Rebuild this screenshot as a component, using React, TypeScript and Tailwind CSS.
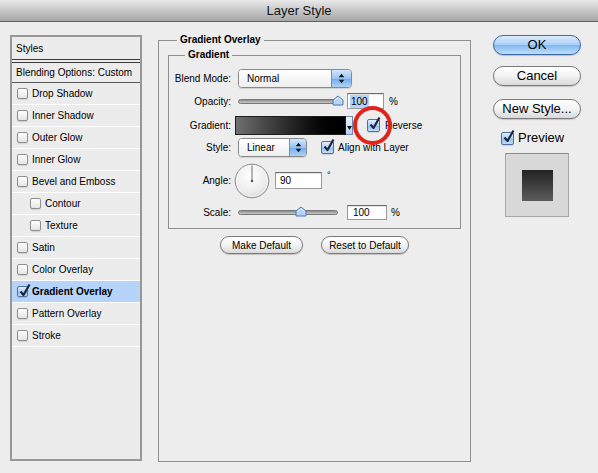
import React from "react";

// Aqua-style checkbox; the tick overflows the box like the Mac original
function CheckBox({ checked = false, big = false }: { checked?: boolean; big?: boolean }) {
  const box = big ? "w-[13px] h-[13px]" : "w-[11px] h-[11px]";
  const face = checked
    ? "border-[#50719f] bg-[linear-gradient(to_bottom,#e2eefc,#b0d0f4_50%,#8dbbee_51%,#c4def9)]"
    : "border-[#8f8f8f] bg-linear-to-b from-white to-[#e4e4e4]";
  return (
    <span className={`relative shrink-0 rounded-[2px] border shadow-[0_1px_1px_rgba(0,0,0,0.12)] ${box} ${face}`}>
      {checked && (
        <svg
          className="absolute left-[1px] top-[-3px] overflow-visible"
          width="11"
          height="13"
          viewBox="0 0 11 13"
        >
          <path d="M1.5 7.5 L4.5 11 L10.5 0.5" fill="none" stroke="#1a2744" strokeWidth="2.2" strokeLinejoin="round" />
        </svg>
      )}
    </span>
  );
}

function PopUp({ label, className, arrowClass }: { label: string; className: string; arrowClass: string }) {
  return (
    <div className={`flex h-[19px] overflow-hidden rounded-[4px] border border-[#8a8a8a] shadow-[0_1px_1px_rgba(0,0,0,0.12)] ${className}`}>
      <div className="flex flex-1 items-center bg-linear-to-b from-white to-[#eeeeee] pl-[8px]">{label}</div>
      <div
        className={`flex items-center justify-center border-l border-[#6f8fbd] bg-[linear-gradient(to_bottom,#d3e6fb,#98c4f3_50%,#70aaeb_51%,#add3f9)] ${arrowClass}`}
      >
        <svg width="7" height="11" viewBox="0 0 7 11">
          <path d="M3.5 0.8 L6.3 4.2 L0.7 4.2 Z M3.5 10.2 L6.3 6.8 L0.7 6.8 Z" fill="#151515" />
        </svg>
      </div>
    </div>
  );
}

function Slider({ className, thumbClass }: { className: string; thumbClass: string }) {
  return (
    <div className={`relative flex h-[12px] items-center ${className}`}>
      <div className="h-[5px] w-full rounded-full border border-[#787878] bg-linear-to-b from-[#8e8e8e] to-[#c9c9c9]" />
      <svg className={`absolute top-[0px] ${thumbClass}`} width="12" height="11" viewBox="0 0 12 11">
        <path
          d="M1 10 L1 5 L6 1 L11 5 L11 10 Z"
          fill="#b4d4f7"
          stroke="#4d78b0"
          strokeWidth="1"
          strokeLinejoin="round"
        />
        <path d="M2 6 L6 2.6 L10 6" fill="none" stroke="#e8f2fd" strokeWidth="1" />
      </svg>
    </div>
  );
}

function NumField({ value, className, selected = false }: { value: string; className: string; selected?: boolean }) {
  return (
    <div
      className={`flex items-center border border-[#9a9a9a] border-t-[#6a6a6a] bg-white pl-[2px] shadow-[inset_0_1px_1px_rgba(0,0,0,0.12)] ${className}`}
    >
      <span className={selected ? "bg-[#b3d3fb] px-[1px] leading-[13px]" : "px-[1px] leading-[13px]"}>{value}</span>
    </div>
  );
}

function PillButton({ children, className }: { children: React.ReactNode; className: string }) {
  return (
    <div
      className={`flex items-center justify-center rounded-full border border-[#7b7b7b] bg-linear-to-b from-white via-[#f3f3f3] to-[#d9d9d9] shadow-[0_1px_1px_rgba(0,0,0,0.18)] ${className}`}
    >
      {children}
    </div>
  );
}

function Dial() {
  return (
    <svg className="-ml-[4px] shrink-0" width="36" height="36" viewBox="0 0 36 36">
      <defs>
        <radialGradient id="dialFace" cx="45%" cy="35%" r="70%">
          <stop offset="0%" stopColor="#ffffff" />
          <stop offset="70%" stopColor="#ececec" />
          <stop offset="100%" stopColor="#d2d2d2" />
        </radialGradient>
      </defs>
      <circle cx="18" cy="18" r="16.8" fill="url(#dialFace)" stroke="#8a8a8a" strokeWidth="1" />
      <circle cx="18" cy="18" r="15.6" fill="none" stroke="#ffffff" strokeWidth="0.8" opacity="0.8" />
      <line x1="18" y1="18" x2="18" y2="2.5" stroke="#6e6e6e" strokeWidth="1" />
      <circle cx="18" cy="18" r="1.3" fill="#555" />
    </svg>
  );
}

const effects: { name: string; indent?: boolean; checked?: boolean }[] = [
  { name: "Drop Shadow" },
  { name: "Inner Shadow" },
  { name: "Outer Glow" },
  { name: "Inner Glow" },
  { name: "Bevel and Emboss" },
  { name: "Contour", indent: true },
  { name: "Texture", indent: true },
  { name: "Satin" },
  { name: "Color Overlay" },
  { name: "Gradient Overlay", checked: true },
  { name: "Pattern Overlay" },
  { name: "Stroke" },
];

function StyleList() {
  return (
    <div className="mt-[13px] h-[426px] w-[132px] shrink-0 border-2 border-[#979797] bg-[#ececec]">
      <div className="flex h-[22px] items-center pl-[4px]">Styles</div>
      <div className="h-[4px] border-y border-[#3c3c3c]" />
      <div className="flex h-[20px] items-center border-b border-[#5a5a5a] pl-[4px]">Blending Options: Custom</div>
      {effects.map((e) => (
        <div
          key={e.name}
          className={`flex h-[22px] items-center gap-[4px] border-b border-white ${e.indent ? "pl-[18px]" : "pl-[5px]"} ${
            e.checked ? "bg-[#b6d4fa] font-bold" : ""
          }`}
        >
          <CheckBox checked={e.checked} />
          <span>{e.name}</span>
        </div>
      ))}
    </div>
  );
}

function Label({ children }: { children: React.ReactNode }) {
  return <span className="w-[62px] shrink-0 text-right">{children}</span>;
}

function GradientPanel() {
  return (
    <fieldset className="ml-[16px] mt-[12px] h-[428px] w-[313px] shrink-0 border border-[#8f8f8f] px-[9px] pt-[3px]">
      <legend className="ml-[9px] px-[3px] text-[10px] font-bold leading-[12px]">Gradient Overlay</legend>

      <fieldset className="w-full border border-[#8f8f8f] pb-[8px] pt-[8px]">
        <legend className="ml-[16px] px-[3px] font-bold leading-[12px]">Gradient</legend>

        <div className="flex h-[19px] items-center">
          <Label>Blend Mode:</Label>
          <PopUp label="Normal" className="ml-[7px] w-[114px]" arrowClass="w-[20px]" />
        </div>

        <div className="mt-[5px] flex h-[16px] items-center">
          <Label>Opacity:</Label>
          <Slider className="ml-[7px] w-[104px]" thumbClass="left-[94px]" />
          <NumField value="100" selected className="ml-[5px] h-[16px] w-[37px]" />
          <span className="ml-[5px]">%</span>
        </div>

        <div className="mt-[7px] flex h-[19px] items-center">
          <Label>Gradient:</Label>
          <div className="ml-[4px] flex h-[19px]">
            <div className="h-full w-[111px] border border-[#1e1e1e] bg-linear-to-r from-[#707070] to-black" />
            <div className="flex h-full w-[7px] items-end justify-center border-y border-r border-[#6f8aae] bg-linear-to-b from-[#edf4fd] to-[#b6d0ef] pb-[4px]">
              <svg width="5" height="4" viewBox="0 0 5 4">
                <path d="M0 0 L5 0 L2.5 4 Z" fill="#111" />
              </svg>
            </div>
          </div>
          <span className="relative ml-[14px] flex items-center">
            <CheckBox checked big />
            <span className="pointer-events-none absolute left-1/2 top-1/2 h-[39px] w-[39px] -translate-x-[21px] -translate-y-[20px] rounded-full border-[4px] border-[#e2231a]" />
          </span>
          <span className="ml-[5px]">Reverse</span>
        </div>

        <div className="mt-[3px] flex h-[19px] items-center">
          <Label>Style:</Label>
          <PopUp label="Linear" className="ml-[7px] w-[69px]" arrowClass="w-[17px]" />
          <span className="ml-[14px] flex items-center">
            <CheckBox checked big />
          </span>
          <span className="ml-[4px]">Align with Layer</span>
        </div>

        <div className="mt-[6px] flex h-[35px] items-center">
          <Label>Angle:</Label>
          <span className="ml-[7px] flex items-center">
            <Dial />
          </span>
          <NumField value="90" className="ml-[5px] h-[17px] w-[47px] pl-[3px]" />
          <span className="ml-[5px] self-start pt-[6px] text-[9px]">°</span>
        </div>

        <div className="mt-[6px] flex h-[16px] items-center">
          <Label>Scale:</Label>
          <Slider className="ml-[7px] w-[100px]" thumbClass="left-[57px]" />
          <NumField value="100" className="ml-[9px] h-[15px] w-[40px] pl-[4px]" />
          <span className="ml-[4px]">%</span>
        </div>
      </fieldset>

      <div className="mt-[7px] flex justify-center gap-[18px]">
        <PillButton className="h-[18px] w-[83px]">Make Default</PillButton>
        <PillButton className="h-[18px] w-[88px]">Reset to Default</PillButton>
      </div>
    </fieldset>
  );
}

function ActionColumn() {
  return (
    <div className="ml-[22px] flex w-[88px] shrink-0 flex-col text-[13px]">
      <div className="mt-[13px] flex h-[20px] items-center justify-center rounded-full border border-[#3f6aa8] bg-[linear-gradient(to_bottom,#dcecfd,#a9cff6_48%,#83b8f0_52%,#bde0fc)] shadow-[0_1px_1px_rgba(0,0,0,0.2)]">
        OK
      </div>
      <PillButton className="mt-[11px] h-[20px]">Cancel</PillButton>
      <PillButton className="mt-[13px] h-[20px]">New Style...</PillButton>
      <div className="ml-[8px] mt-[12px] flex h-[14px] items-center gap-[4px]">
        <CheckBox checked big />
        <span>Preview</span>
      </div>
      <div className="ml-[12px] mt-[8px] flex h-[64px] w-[64px] items-center justify-center border border-[#a6a6a6] border-t-[#8c8c8c] bg-[#d8d8d8]">
        <div className="h-[31px] w-[31px] bg-linear-to-b from-[#242424] to-[#5c5c5c]" />
      </div>
    </div>
  );
}

export default function App() {
  return (
    <div className="h-[473px] w-[598px] overflow-hidden bg-[#ededed] font-['Liberation_Sans',Arial,sans-serif] text-[10px] text-black">
      <div className="flex h-[22px] items-center justify-center border-b border-[#5f5f5f] bg-linear-to-b from-[#e9e9e9] to-[#a7a7a7] text-[13px] text-[#141414]">
        Layer Style
      </div>
      <div className="flex items-start pl-[10px]">
        <StyleList />
        <GradientPanel />
        <ActionColumn />
      </div>
    </div>
  );
}
